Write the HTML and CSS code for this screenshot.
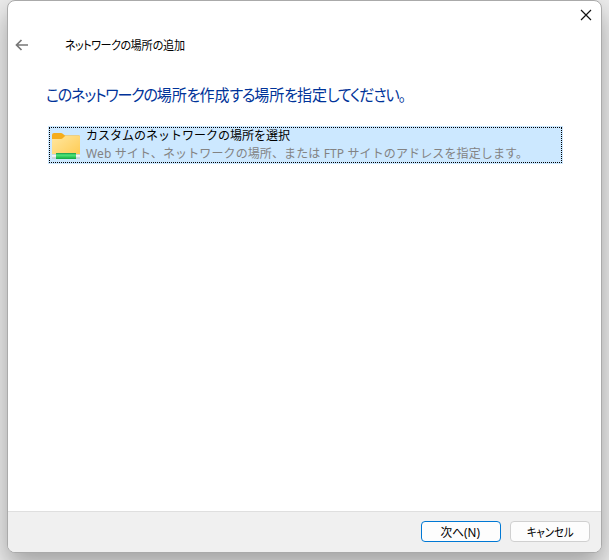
FILE: index.html
```html
<!DOCTYPE html>
<html lang="ja">
<head>
<meta charset="utf-8">
<title>ネットワークの場所の追加</title>
<link rel="stylesheet" href="styles.css">
</head>
<body>
<main class="window">
  <div class="titlebar">
    <svg class="close" viewBox="0 0 12 12"><path d="M1 1 11 11M11 1 1 11"/></svg>
  </div>
  <header class="header">
    <svg class="back" viewBox="0 0 14 12"><path d="M13 6H1.5M6.5 1 1.5 6l5 5"/></svg>
    <span class="caption"><span class="kana">ネットワークの</span>場所<span class="kana">の</span>追加</span>
  </header>
  <section class="content">
    <h1 class="heading"><span class="kana">このネットワークの</span>場所<span class="kana">を</span>作成<span class="kana">する</span>場所<span class="kana">を</span>指定<span class="kana">してください。</span></h1>
    <div class="choice">
      <svg class="folder" viewBox="0 0 30 30">
        <defs>
          <linearGradient id="face" x1="0" y1="0" x2="1" y2="1"><stop offset="0" stop-color="#ffe7a0"/><stop offset="1" stop-color="#ffc94d"/></linearGradient>
          <linearGradient id="pipe" x1="0" y1="0" x2="0" y2="1"><stop offset="0" stop-color="#17984b"/><stop offset=".35" stop-color="#4fe87a"/><stop offset="1" stop-color="#12a53f"/></linearGradient>
          <linearGradient id="cap" x1="0" y1="0" x2="0" y2="1"><stop offset="0" stop-color="#b9c3c8"/><stop offset=".4" stop-color="#fff"/><stop offset="1" stop-color="#b4bdc2"/></linearGradient>
        </defs>
        <path fill="#f5ad1d" d="M1 5Q1 3 3 3h7q1 0 2 1l2 1.5h14q1 0 1 1V12H1z"/>
        <path fill="url(#face)" d="M1 9h9q1 0 2-1l1.500-1.500q.8-.8 2-.8h12.500q1 0 1 1V26q0 2-2 2H3q-2 0-2-2z"/>
        <path fill="url(#cap)" d="M1 24h28v4.500H1z"/>
        <path fill="url(#pipe)" d="M5 23h20v6H5z"/>
      </svg>
      <div class="labels">
        <div class="name">カスタムのネットワークの場所を選択</div>
        <div class="description">Web サイト、ネットワークの場所、または FTP サイトのアドレスを指定します。</div>
      </div>
    </div>
  </section>
  <footer class="footer">
    <button class="button primary"><span class="next-text">次へ(N)</span></button>
    <button class="button"><span class="cancel-text">キャンセル</span></button>
  </footer>
</main>
</body>
</html>
```
FILE: styles.css
```css
* { box-sizing: border-box; }
body {
  margin: 0;
  height: 560px;
  padding: 0 7px 7px;
  overflow: hidden;
  background: #ececec;
  font-family: "Noto Sans", "Noto Sans CJK JP", sans-serif;
  font-size: 12px;
  color: #000;
}
.window {
  width: 595px;
  height: 553px;
  display: flex;
  flex-direction: column;
  overflow: hidden;
  border: 1px solid #aaa;
  border-radius: 8px;
  background: #fff;
  box-shadow: 0 12px 26px rgba(0, 0, 0, .32);
}
.titlebar { height: 29px; flex: none; display: flex; justify-content: flex-end; padding: 8px 9px 0 0; }
.close { width: 12px; height: 12px; fill: none; stroke: #111; stroke-width: 1.2; }
.header { height: 30px; display: flex; align-items: center; padding-left: 7px; }
.back { width: 14px; height: 12px; fill: none; stroke: #777; stroke-width: 1.7; }
.caption {
  display: inline-block;
  margin-left: 36px;
  white-space: nowrap;
  font-feature-settings: "palt";
  transform: scaleX(.925);
  transform-origin: left;
}
.caption .kana { letter-spacing: -.6px; }
.content { flex: 1; padding: 23px 38px 0 38px; }
.heading {
  margin: 0 0 19px;
  height: 24px;
  line-height: 24px;
  font-size: 16px;
  font-weight: 400;
  color: #003399;
  white-space: nowrap;
  font-feature-settings: "palt";
  transform: scaleX(.938);
  transform-origin: left;
}
.heading .kana { letter-spacing: -1.25px; }
.choice {
  width: 515px;
  height: 38px;
  margin-left: 2px;
  padding: 4px 3px;
  display: flex;
  background: #cce8ff;
  outline: 1px dotted #000;
  outline-offset: -2px;
}
.folder { width: 30px; height: 30px; flex: none; }
.labels { margin-left: 5px; margin-top: -3px; white-space: nowrap; }
.name, .description { height: 18px; line-height: 18px; }
.description { color: #838383; letter-spacing: .12px; }
.footer {
  height: 41px;
  flex: none;
  display: flex;
  justify-content: flex-end;
  gap: 9px;
  padding: 9px 11px 0 0;
  border-top: 1px solid #dfdfdf;
  background: #f0f0f0;
}
.button {
  width: 80px;
  height: 21px;
  padding: 0;
  display: flex;
  align-items: center;
  justify-content: center;
  border: 1px solid #d0d0d0;
  border-radius: 4px;
  background: #fdfdfd;
  color: #000;
  font: 12px "Noto Sans", "Noto Sans CJK JP", sans-serif;
  white-space: nowrap;
}
.primary { border-color: #0078d4; }
.next-text, .cancel-text { display: inline-block; font-feature-settings: "palt"; }
.next-text { margin-right: 1px; transform: scaleX(.97); }
.cancel-text { transform: scaleX(.86); }
```
